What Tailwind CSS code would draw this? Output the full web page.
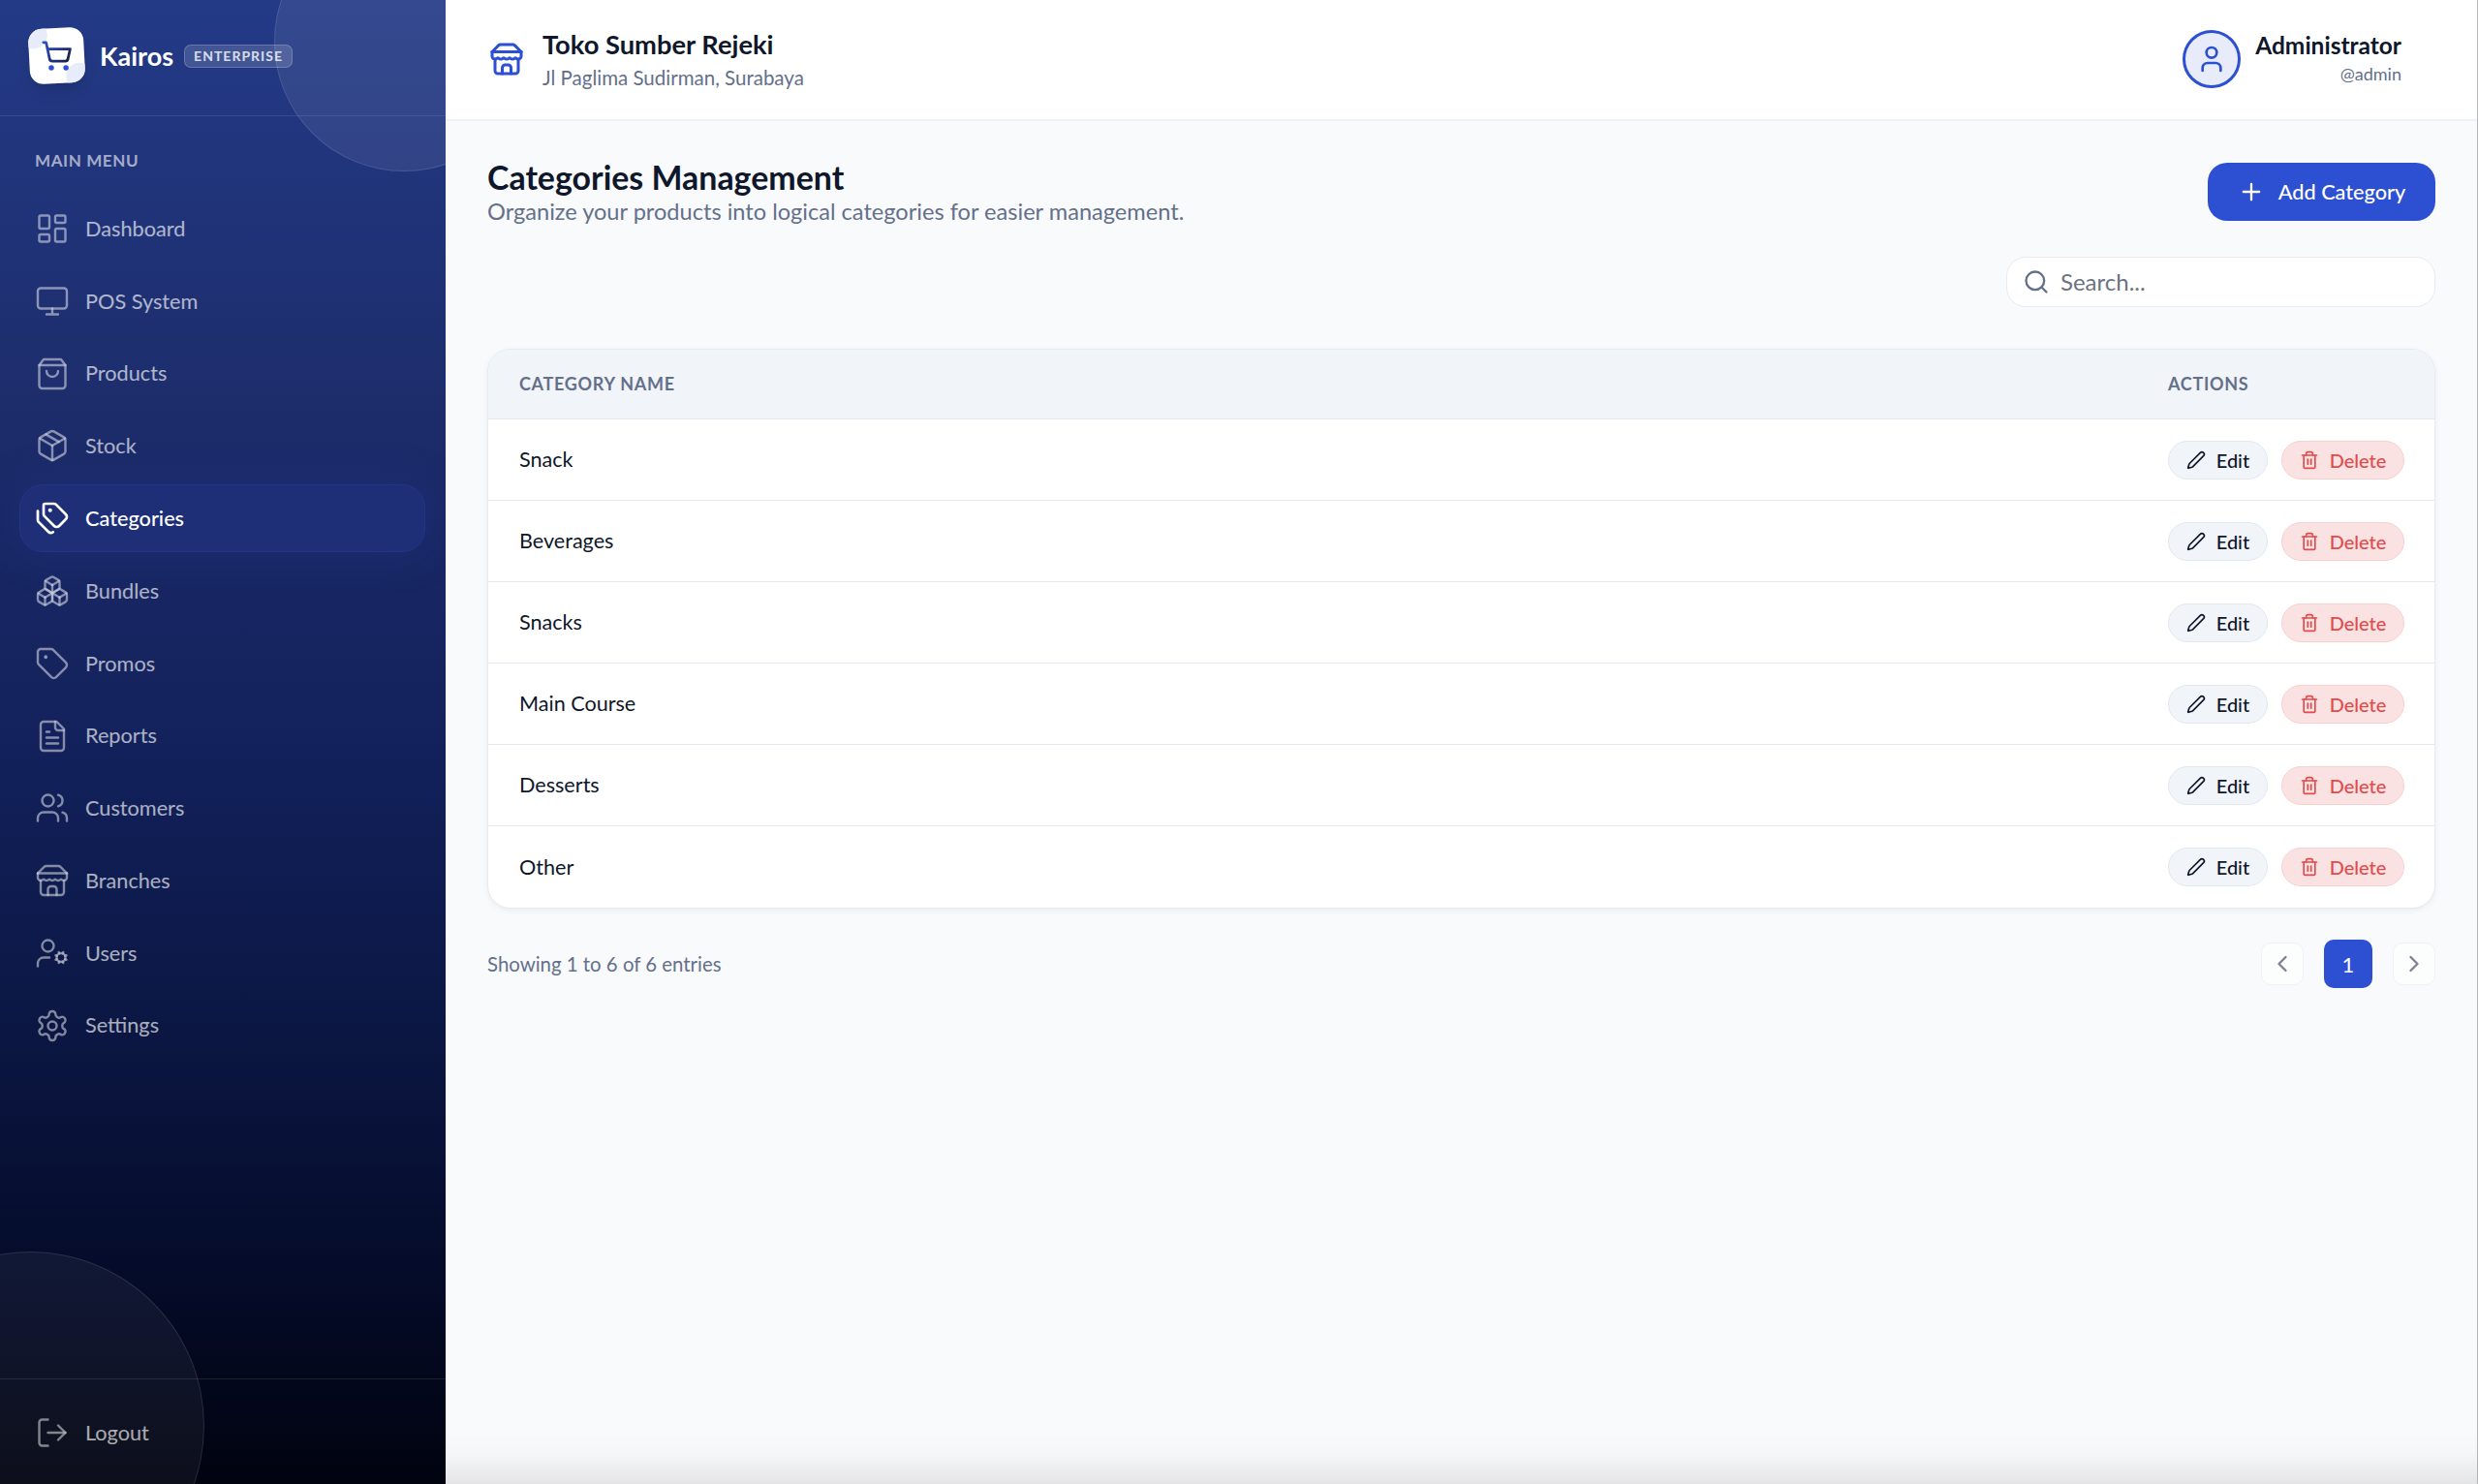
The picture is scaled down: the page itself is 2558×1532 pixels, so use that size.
<!DOCTYPE html>
<html lang="en">
<head>
  <meta charset="UTF-8" />
  <meta name="viewport" content="width=device-width, initial-scale=1" />
  <title>Categories Management</title>
  <script src="https://cdn.jsdelivr.net/npm/@tailwindcss/browser@4"></script>
</head>
<body class="h-screen overflow-hidden bg-[#f9fafc] font-['Lato',sans-serif] text-[#0f172a]">

  <svg class="hidden">
    <symbol id="i-dashboard" viewBox="0 0 24 24"><rect width="7" height="9" x="3" y="3" rx="1"/><rect width="7" height="5" x="14" y="3" rx="1"/><rect width="7" height="9" x="14" y="12" rx="1"/><rect width="7" height="5" x="3" y="16" rx="1"/></symbol>
    <symbol id="i-monitor" viewBox="0 0 24 24"><rect width="20" height="14" x="2" y="3" rx="2"/><path d="M8 21h8M12 17v4"/></symbol>
    <symbol id="i-bag" viewBox="0 0 24 24"><path d="M6 2 3 6v14a2 2 0 0 0 2 2h14a2 2 0 0 0 2-2V6l-3-4Z"/><path d="M3 6h18"/><path d="M16 10a4 4 0 0 1-8 0"/></symbol>
    <symbol id="i-package" viewBox="0 0 24 24"><path d="M11 21.73a2 2 0 0 0 2 0l7-4A2 2 0 0 0 21 16V8a2 2 0 0 0-1-1.73l-7-4a2 2 0 0 0-2 0l-7 4A2 2 0 0 0 3 8v8a2 2 0 0 0 1 1.73z"/><path d="M12 22V12"/><path d="M3.29 7 12 12l8.71-5"/><path d="m7.5 4.27 9 5.15"/></symbol>
    <symbol id="i-tags" viewBox="0 0 24 24"><path d="M13.172 2a2 2 0 0 1 1.414.586l6.71 6.71a2.4 2.4 0 0 1 0 3.408l-4.592 4.592a2.4 2.4 0 0 1-3.408 0l-6.71-6.71A2 2 0 0 1 6 9.172V3a1 1 0 0 1 1-1z"/><path d="M2 7v6.172a2 2 0 0 0 .586 1.414l6.71 6.71a2.4 2.4 0 0 0 3.2.2"/><circle cx="10.5" cy="6.5" r=".5" fill="currentColor"/></symbol>
    <symbol id="i-boxes" viewBox="0 0 24 24"><path d="M2.97 12.92A2 2 0 0 0 2 14.63v3.24a2 2 0 0 0 .97 1.71l3 1.8a2 2 0 0 0 2.06 0L12 19v-5.5l-5-3-4.03 2.42Z"/><path d="m7 16.5-4.74-2.85"/><path d="m7 16.5 5-3"/><path d="M7 16.5v5.17"/><path d="M12 13.5V19l3.97 2.38a2 2 0 0 0 2.06 0l3-1.8a2 2 0 0 0 .97-1.71v-3.24a2 2 0 0 0-.97-1.71L17 10.5l-5 3Z"/><path d="m17 16.5-5-3"/><path d="m17 16.5 4.74-2.85"/><path d="M17 16.5v5.17"/><path d="M7.97 4.42A2 2 0 0 0 7 6.13v4.37l5 3 5-3V6.13a2 2 0 0 0-.97-1.71l-3-1.8a2 2 0 0 0-2.06 0l-3 1.8Z"/><path d="M12 8 7.26 5.15"/><path d="m12 8 4.74-2.85"/><path d="M12 13.5V8"/></symbol>
    <symbol id="i-tag" viewBox="0 0 24 24"><path d="M12.586 2.586A2 2 0 0 0 11.172 2H4a2 2 0 0 0-2 2v7.172a2 2 0 0 0 .586 1.414l8.704 8.704a2.426 2.426 0 0 0 3.42 0l6.58-6.58a2.426 2.426 0 0 0 0-3.42z"/><circle cx="7.5" cy="7.5" r=".5" fill="currentColor"/></symbol>
    <symbol id="i-file" viewBox="0 0 24 24"><path d="M15 2H6a2 2 0 0 0-2 2v16a2 2 0 0 0 2 2h12a2 2 0 0 0 2-2V7Z"/><path d="M14 2v4a2 2 0 0 0 2 2h4"/><path d="M10 9H8"/><path d="M16 13H8"/><path d="M16 17H8"/></symbol>
    <symbol id="i-users" viewBox="0 0 24 24"><path d="M16 21v-2a4 4 0 0 0-4-4H6a4 4 0 0 0-4 4v2"/><circle cx="9" cy="7" r="4"/><path d="M22 21v-2a4 4 0 0 0-3-3.87"/><path d="M16 3.13a4 4 0 0 1 0 7.75"/></symbol>
    <symbol id="i-store" viewBox="0 0 24 24"><path d="m2 7 4.41-4.41A2 2 0 0 1 7.83 2h8.34a2 2 0 0 1 1.42.59L22 7"/><path d="M4 12v8a2 2 0 0 0 2 2h12a2 2 0 0 0 2-2v-8"/><path d="M15 22v-4a2 2 0 0 0-2-2h-2a2 2 0 0 0-2 2v4"/><path d="M2 7h20"/><path d="M22 7v3a2 2 0 0 1-2 2a2.7 2.7 0 0 1-1.59-.63.7.7 0 0 0-.82 0A2.7 2.7 0 0 1 16 12a2.7 2.7 0 0 1-1.59-.63.7.7 0 0 0-.82 0A2.7 2.7 0 0 1 12 12a2.7 2.7 0 0 1-1.59-.63.7.7 0 0 0-.82 0A2.7 2.7 0 0 1 8 12a2.7 2.7 0 0 1-1.59-.63.7.7 0 0 0-.82 0A2.7 2.7 0 0 1 4 12a2 2 0 0 1-2-2V7"/></symbol>
    <symbol id="i-usercog" viewBox="0 0 24 24"><path d="M10 15H6a4 4 0 0 0-4 4v2"/><path d="m14.305 16.53.923-.382"/><path d="m15.228 13.852-.923-.383"/><path d="m16.852 12.228-.383-.923"/><path d="m16.852 17.772-.383.924"/><path d="m19.148 12.228.383-.923"/><path d="m19.53 18.696-.382-.924"/><path d="m20.772 13.852.924-.383"/><path d="m20.772 16.148.924.383"/><circle cx="18" cy="15" r="3"/><circle cx="9" cy="7" r="4"/></symbol>
    <symbol id="i-settings" viewBox="0 0 24 24"><path d="M12.22 2h-.44a2 2 0 0 0-2 2v.18a2 2 0 0 1-1 1.73l-.43.25a2 2 0 0 1-2 0l-.15-.08a2 2 0 0 0-2.73.73l-.22.38a2 2 0 0 0 .73 2.73l.15.1a2 2 0 0 1 1 1.72v.51a2 2 0 0 1-1 1.74l-.15.09a2 2 0 0 0-.73 2.73l.22.38a2 2 0 0 0 2.73.73l.15-.08a2 2 0 0 1 2 0l.43.25a2 2 0 0 1 1 1.73V20a2 2 0 0 0 2 2h.44a2 2 0 0 0 2-2v-.18a2 2 0 0 1 1-1.73l.43-.25a2 2 0 0 1 2 0l.15.08a2 2 0 0 0 2.73-.73l.22-.39a2 2 0 0 0-.73-2.73l-.15-.08a2 2 0 0 1-1-1.74v-.5a2 2 0 0 1 1-1.74l.15-.09a2 2 0 0 0 .73-2.73l-.22-.38a2 2 0 0 0-2.73-.73l-.15.08a2 2 0 0 1-2 0l-.43-.25a2 2 0 0 1-1-1.73V4a2 2 0 0 0-2-2z"/><circle cx="12" cy="12" r="3"/></symbol>
    <symbol id="i-logout" viewBox="0 0 24 24"><path d="M9 21H5a2 2 0 0 1-2-2V5a2 2 0 0 1 2-2h4"/><path d="m16 17 5-5-5-5"/><path d="M21 12H9"/></symbol>
    <symbol id="i-pen" viewBox="0 0 24 24"><path d="M21.174 6.812a1 1 0 0 0-3.986-3.987L3.842 16.174a2 2 0 0 0-.5.83l-1.321 4.352a.5.5 0 0 0 .623.622l4.353-1.32a2 2 0 0 0 .83-.497z"/></symbol>
    <symbol id="i-trash" viewBox="0 0 24 24"><path d="M3 6h18"/><path d="M19 6v14c0 1-1 2-2 2H7c-1 0-2-1-2-2V6"/><path d="M8 6V4c0-1 1-2 2-2h4c1 0 2 1 2 2v2"/><path d="M10 11v6"/><path d="M14 11v6"/></symbol>
  </svg>

  <div class="flex h-full">
    <!-- sidebar -->
    <aside class="relative w-[460px] shrink-0 overflow-hidden flex flex-col bg-[linear-gradient(180deg,#233a87_0%,#1d2d6c_27%,#12205a_52%,#0a153f_72%,#050c2b_85%,#01030f_100%)]">
      <div class="absolute left-[283px] top-[-91px] size-[268px] rounded-full bg-white/8 border border-white/10"></div>
      <div class="absolute left-[-149px] top-[1292px] size-[360px] rounded-full bg-white/5 border border-white/10"></div>

      <div class="relative h-[120px] shrink-0 border-b border-white/10 flex items-center pl-[30px] pb-[4px]">
        <div class="relative size-[57px] -rotate-3 rounded-[14px] bg-white overflow-hidden shadow-lg flex items-center justify-center">
          <div class="absolute -left-[8px] -top-[8px] size-[28px] rounded-full bg-[#e8ecfa]"></div>
          <div class="absolute -right-[8px] -bottom-[8px] size-[28px] rounded-full bg-[#e8ecfa]"></div>
          <svg class="relative size-[33px] rotate-3" viewBox="0 0 24 24" fill="none" stroke="url(#cart)" stroke-width="2" stroke-linecap="round" stroke-linejoin="round">
            <defs><linearGradient id="cart" gradientUnits="userSpaceOnUse" x1="2" y1="2" x2="22" y2="22"><stop offset="0" stop-color="#2d4fd2"/><stop offset="1" stop-color="#0f172a"/></linearGradient></defs>
            <circle cx="8" cy="21" r="1" stroke="#2d4fd2"/><circle cx="19" cy="21" r="1" stroke="#2d4fd2"/>
            <path d="M2.05 2.05h2l2.66 12.42a2 2 0 0 0 2 1.58h9.78a2 2 0 0 0 1.95-1.57l1.65-7.43H5.12"/>
          </svg>
        </div>
        <span class="ml-[16px] text-[27px] font-bold text-white leading-none">Kairos</span>
        <span class="ml-[11px] h-[24px] px-[9px] flex items-center rounded-[7px] border border-white/20 bg-white/15 text-[14px] font-bold tracking-[1px] text-white/80">ENTERPRISE</span>
      </div>

      <div class="relative pl-[36px] mt-[36px] text-[17px] font-bold tracking-[0.6px] text-white/60 leading-[20px]">MAIN MENU</div>

      <nav class="relative mt-[25px] ml-[20px] mr-[21px] flex flex-col gap-[4.8px]">
        <a class="h-[70px] px-[15.5px] flex items-center gap-[16.5px] text-[21.7px] text-white/65"><svg class="size-[36px] opacity-75" fill="none" stroke="currentColor" stroke-width="1.6" stroke-linecap="round" stroke-linejoin="round"><use href="#i-dashboard"/></svg>Dashboard</a>
        <a class="h-[70px] px-[15.5px] flex items-center gap-[16.5px] text-[21.7px] text-white/65"><svg class="size-[36px] opacity-75" fill="none" stroke="currentColor" stroke-width="1.6" stroke-linecap="round" stroke-linejoin="round"><use href="#i-monitor"/></svg>POS System</a>
        <a class="h-[70px] px-[15.5px] flex items-center gap-[16.5px] text-[21.7px] text-white/65"><svg class="size-[36px] opacity-75" fill="none" stroke="currentColor" stroke-width="1.6" stroke-linecap="round" stroke-linejoin="round"><use href="#i-bag"/></svg>Products</a>
        <a class="h-[70px] px-[15.5px] flex items-center gap-[16.5px] text-[21.7px] text-white/65"><svg class="size-[36px] opacity-75" fill="none" stroke="currentColor" stroke-width="1.6" stroke-linecap="round" stroke-linejoin="round"><use href="#i-package"/></svg>Stock</a>
        <a class="h-[70px] px-[14.5px] flex items-center gap-[16.5px] text-[21.7px] font-medium text-white rounded-[24px] bg-[#1e2f78] border border-[#243488] shadow-[0_0_40px_rgba(35,55,140,0.35)]"><svg class="size-[36px]" fill="none" stroke="currentColor" stroke-width="1.8" stroke-linecap="round" stroke-linejoin="round"><use href="#i-tags"/></svg>Categories</a>
        <a class="h-[70px] px-[15.5px] flex items-center gap-[16.5px] text-[21.7px] text-white/65"><svg class="size-[36px] opacity-75" fill="none" stroke="currentColor" stroke-width="1.6" stroke-linecap="round" stroke-linejoin="round"><use href="#i-boxes"/></svg>Bundles</a>
        <a class="h-[70px] px-[15.5px] flex items-center gap-[16.5px] text-[21.7px] text-white/65"><svg class="size-[36px] opacity-75" fill="none" stroke="currentColor" stroke-width="1.6" stroke-linecap="round" stroke-linejoin="round"><use href="#i-tag"/></svg>Promos</a>
        <a class="h-[70px] px-[15.5px] flex items-center gap-[16.5px] text-[21.7px] text-white/65"><svg class="size-[36px] opacity-75" fill="none" stroke="currentColor" stroke-width="1.6" stroke-linecap="round" stroke-linejoin="round"><use href="#i-file"/></svg>Reports</a>
        <a class="h-[70px] px-[15.5px] flex items-center gap-[16.5px] text-[21.7px] text-white/65"><svg class="size-[36px] opacity-75" fill="none" stroke="currentColor" stroke-width="1.6" stroke-linecap="round" stroke-linejoin="round"><use href="#i-users"/></svg>Customers</a>
        <a class="h-[70px] px-[15.5px] flex items-center gap-[16.5px] text-[21.7px] text-white/65"><svg class="size-[36px] opacity-75" fill="none" stroke="currentColor" stroke-width="1.6" stroke-linecap="round" stroke-linejoin="round"><use href="#i-store"/></svg>Branches</a>
        <a class="h-[70px] px-[15.5px] flex items-center gap-[16.5px] text-[21.7px] text-white/65"><svg class="size-[36px] opacity-75" fill="none" stroke="currentColor" stroke-width="1.6" stroke-linecap="round" stroke-linejoin="round"><use href="#i-usercog"/></svg>Users</a>
        <a class="h-[70px] px-[15.5px] flex items-center gap-[16.5px] text-[21.7px] text-white/65"><svg class="size-[36px] opacity-75" fill="none" stroke="currentColor" stroke-width="1.6" stroke-linecap="round" stroke-linejoin="round"><use href="#i-settings"/></svg>Settings</a>
      </nav>

      <div class="relative mt-auto h-[109px] border-t border-white/10 px-[35.5px] pt-[2px] flex items-center gap-[16.5px] text-[21.7px] text-white/65">
        <svg class="size-[36px] opacity-75" fill="none" stroke="currentColor" stroke-width="1.6" stroke-linecap="round" stroke-linejoin="round"><use href="#i-logout"/></svg>Logout
      </div>
    </aside>

    <!-- main -->
    <div class="flex-1 min-w-0 flex flex-col border-r border-[#b4b5b8] bg-[linear-gradient(180deg,#f9fafc_0%,#f9fafc_96.5%,#f5f6f8_98%,#e5e5e7_100%)]">
      <header class="h-[125px] shrink-0 bg-white border-b-2 border-[#f0f1f5] flex items-center justify-between pl-[45px] pr-[78px]">
        <div class="flex items-center gap-[19px]">
          <svg class="size-[36px] -mt-[2px] text-[#2d4fd2]" fill="none" stroke="currentColor" stroke-width="2" stroke-linecap="round" stroke-linejoin="round"><use href="#i-store"/></svg>
          <div class="flex flex-col">
            <span class="text-[27.3px] font-bold leading-[32px] text-[#0f172a]">Toko Sumber Rejeki</span>
            <span class="text-[20.5px] leading-[26px] mt-[5px] text-[#64708a]">Jl Paglima Sudirman, Surabaya</span>
          </div>
        </div>
        <div class="flex items-center gap-[15px]">
          <div class="size-[60px] -mt-[1px] rounded-full border-[3px] border-[#2d4fd2] bg-[#e8ecfa] flex items-center justify-center text-[#2d4fd2]">
            <svg class="size-[32px]" viewBox="0 0 24 24" fill="none" stroke="currentColor" stroke-width="2" stroke-linecap="round" stroke-linejoin="round"><path d="M19 21v-2a4 4 0 0 0-4-4H9a4 4 0 0 0-4 4v2"/><circle cx="12" cy="7" r="4"/></svg>
          </div>
          <div class="flex flex-col items-end -mt-[3px]">
            <span class="text-[24.5px] font-bold leading-[30px] text-[#0f172a]">Administrator</span>
            <span class="text-[18px] leading-[24px] mt-[2px] text-[#64708a]">@admin</span>
          </div>
        </div>
      </header>

      <main class="flex-1 pl-[43px] pr-[43px] pt-[43px]">
        <div class="flex items-start justify-between">
          <div class="-mt-[1px]">
            <h1 class="text-[33.9px] font-bold leading-[32px] text-[#0f172a]">Categories Management</h1>
            <p class="text-[23.6px] leading-[32px] mt-[3px] text-[#64708a]">Organize your products into logical categories for easier management.</p>
          </div>
          <button class="h-[60px] w-[235px] rounded-[20px] bg-[#2d4fd2] text-white text-[21.7px] font-medium flex items-center justify-center gap-[14px]">
            <svg class="size-[28px]" viewBox="0 0 24 24" fill="none" stroke="currentColor" stroke-width="2" stroke-linecap="round"><path d="M5 12h14M12 5v14"/></svg>
            Add Category
          </button>
        </div>

        <div class="flex justify-end mt-[31px]">
          <div class="w-[443px] h-[52px] rounded-[20px] bg-white border border-[#e8ebf2] flex items-center pl-[16px] gap-[11px]">
            <svg class="size-[28px] text-[#64708a]" viewBox="0 0 24 24" fill="none" stroke="currentColor" stroke-width="2" stroke-linecap="round"><circle cx="11" cy="11" r="8"/><path d="m21 21-4.3-4.3"/></svg>
            <span class="text-[24px] text-[#6b7280]">Search...</span>
          </div>
        </div>

        <div class="mt-[43px] rounded-[24px] bg-white border border-[#e6eaf2] shadow-[0_2px_6px_rgba(15,23,42,0.06)] overflow-hidden">
          <div class="h-[72px] bg-[#f1f4f9] border-b border-[#e2e8f0] flex items-center justify-between pl-[32px] pr-[31px]">
            <span class="text-[18px] font-bold tracking-[0.7px] text-[#64708a]">CATEGORY NAME</span>
            <span class="w-[244px] text-[18px] font-bold tracking-[0.7px] text-[#64708a]">ACTIONS</span>
          </div>

          <div class="h-[84px] border-b border-[#e2e8f0] flex items-center justify-between pl-[32px] pr-[31px]">
            <span class="text-[21.6px]">Snack</span>
            <div class="flex gap-[14px]">
              <button class="h-[40px] w-[103px] rounded-full bg-[#f1f4f9] border border-[#e2e8f0] flex items-center justify-center gap-[11px] text-[20px] font-medium"><svg class="size-[20px]" fill="none" stroke="currentColor" stroke-width="2" stroke-linecap="round" stroke-linejoin="round"><use href="#i-pen"/></svg>Edit</button>
              <button class="h-[40px] w-[127px] rounded-full bg-[#fbe2e2] border border-[#f9d0d0] flex items-center justify-center gap-[11px] text-[20px] font-medium text-[#e14b4b]"><svg class="size-[20px]" fill="none" stroke="currentColor" stroke-width="2" stroke-linecap="round" stroke-linejoin="round"><use href="#i-trash"/></svg>Delete</button>
            </div>
          </div>
          <div class="h-[84px] border-b border-[#e2e8f0] flex items-center justify-between pl-[32px] pr-[31px]">
            <span class="text-[21.6px]">Beverages</span>
            <div class="flex gap-[14px]">
              <button class="h-[40px] w-[103px] rounded-full bg-[#f1f4f9] border border-[#e2e8f0] flex items-center justify-center gap-[11px] text-[20px] font-medium"><svg class="size-[20px]" fill="none" stroke="currentColor" stroke-width="2" stroke-linecap="round" stroke-linejoin="round"><use href="#i-pen"/></svg>Edit</button>
              <button class="h-[40px] w-[127px] rounded-full bg-[#fbe2e2] border border-[#f9d0d0] flex items-center justify-center gap-[11px] text-[20px] font-medium text-[#e14b4b]"><svg class="size-[20px]" fill="none" stroke="currentColor" stroke-width="2" stroke-linecap="round" stroke-linejoin="round"><use href="#i-trash"/></svg>Delete</button>
            </div>
          </div>
          <div class="h-[84px] border-b border-[#e2e8f0] flex items-center justify-between pl-[32px] pr-[31px]">
            <span class="text-[21.6px]">Snacks</span>
            <div class="flex gap-[14px]">
              <button class="h-[40px] w-[103px] rounded-full bg-[#f1f4f9] border border-[#e2e8f0] flex items-center justify-center gap-[11px] text-[20px] font-medium"><svg class="size-[20px]" fill="none" stroke="currentColor" stroke-width="2" stroke-linecap="round" stroke-linejoin="round"><use href="#i-pen"/></svg>Edit</button>
              <button class="h-[40px] w-[127px] rounded-full bg-[#fbe2e2] border border-[#f9d0d0] flex items-center justify-center gap-[11px] text-[20px] font-medium text-[#e14b4b]"><svg class="size-[20px]" fill="none" stroke="currentColor" stroke-width="2" stroke-linecap="round" stroke-linejoin="round"><use href="#i-trash"/></svg>Delete</button>
            </div>
          </div>
          <div class="h-[84px] border-b border-[#e2e8f0] flex items-center justify-between pl-[32px] pr-[31px]">
            <span class="text-[21.6px]">Main Course</span>
            <div class="flex gap-[14px]">
              <button class="h-[40px] w-[103px] rounded-full bg-[#f1f4f9] border border-[#e2e8f0] flex items-center justify-center gap-[11px] text-[20px] font-medium"><svg class="size-[20px]" fill="none" stroke="currentColor" stroke-width="2" stroke-linecap="round" stroke-linejoin="round"><use href="#i-pen"/></svg>Edit</button>
              <button class="h-[40px] w-[127px] rounded-full bg-[#fbe2e2] border border-[#f9d0d0] flex items-center justify-center gap-[11px] text-[20px] font-medium text-[#e14b4b]"><svg class="size-[20px]" fill="none" stroke="currentColor" stroke-width="2" stroke-linecap="round" stroke-linejoin="round"><use href="#i-trash"/></svg>Delete</button>
            </div>
          </div>
          <div class="h-[84px] border-b border-[#e2e8f0] flex items-center justify-between pl-[32px] pr-[31px]">
            <span class="text-[21.6px]">Desserts</span>
            <div class="flex gap-[14px]">
              <button class="h-[40px] w-[103px] rounded-full bg-[#f1f4f9] border border-[#e2e8f0] flex items-center justify-center gap-[11px] text-[20px] font-medium"><svg class="size-[20px]" fill="none" stroke="currentColor" stroke-width="2" stroke-linecap="round" stroke-linejoin="round"><use href="#i-pen"/></svg>Edit</button>
              <button class="h-[40px] w-[127px] rounded-full bg-[#fbe2e2] border border-[#f9d0d0] flex items-center justify-center gap-[11px] text-[20px] font-medium text-[#e14b4b]"><svg class="size-[20px]" fill="none" stroke="currentColor" stroke-width="2" stroke-linecap="round" stroke-linejoin="round"><use href="#i-trash"/></svg>Delete</button>
            </div>
          </div>
          <div class="h-[84px] flex items-center justify-between pl-[32px] pr-[31px]">
            <span class="text-[21.6px]">Other</span>
            <div class="flex gap-[14px]">
              <button class="h-[40px] w-[103px] rounded-full bg-[#f1f4f9] border border-[#e2e8f0] flex items-center justify-center gap-[11px] text-[20px] font-medium"><svg class="size-[20px]" fill="none" stroke="currentColor" stroke-width="2" stroke-linecap="round" stroke-linejoin="round"><use href="#i-pen"/></svg>Edit</button>
              <button class="h-[40px] w-[127px] rounded-full bg-[#fbe2e2] border border-[#f9d0d0] flex items-center justify-center gap-[11px] text-[20px] font-medium text-[#e14b4b]"><svg class="size-[20px]" fill="none" stroke="currentColor" stroke-width="2" stroke-linecap="round" stroke-linejoin="round"><use href="#i-trash"/></svg>Delete</button>
            </div>
          </div>
        </div>

        <div class="mt-[32px] flex items-center justify-between">
          <span class="text-[20.4px] text-[#64708a]">Showing 1 to 6 of 6 entries</span>
          <div class="flex items-center gap-[21px]">
            <button class="size-[44px] rounded-[10px] bg-[#fcfdfd] border border-[#f0f2f6] flex items-center justify-center text-[#80838f]"><svg class="size-[28px]" viewBox="0 0 24 24" fill="none" stroke="currentColor" stroke-width="2" stroke-linecap="round" stroke-linejoin="round"><path d="m15 18-6-6 6-6"/></svg></button>
            <button class="size-[50px] rounded-[10px] bg-[#2d4fd2] text-white text-[22px]">1</button>
            <button class="size-[44px] rounded-[10px] bg-[#fcfdfd] border border-[#f0f2f6] flex items-center justify-center text-[#80838f]"><svg class="size-[28px]" viewBox="0 0 24 24" fill="none" stroke="currentColor" stroke-width="2" stroke-linecap="round" stroke-linejoin="round"><path d="m9 18 6-6-6-6"/></svg></button>
          </div>
        </div>
      </main>
    </div>
  </div>
</body>
</html>
